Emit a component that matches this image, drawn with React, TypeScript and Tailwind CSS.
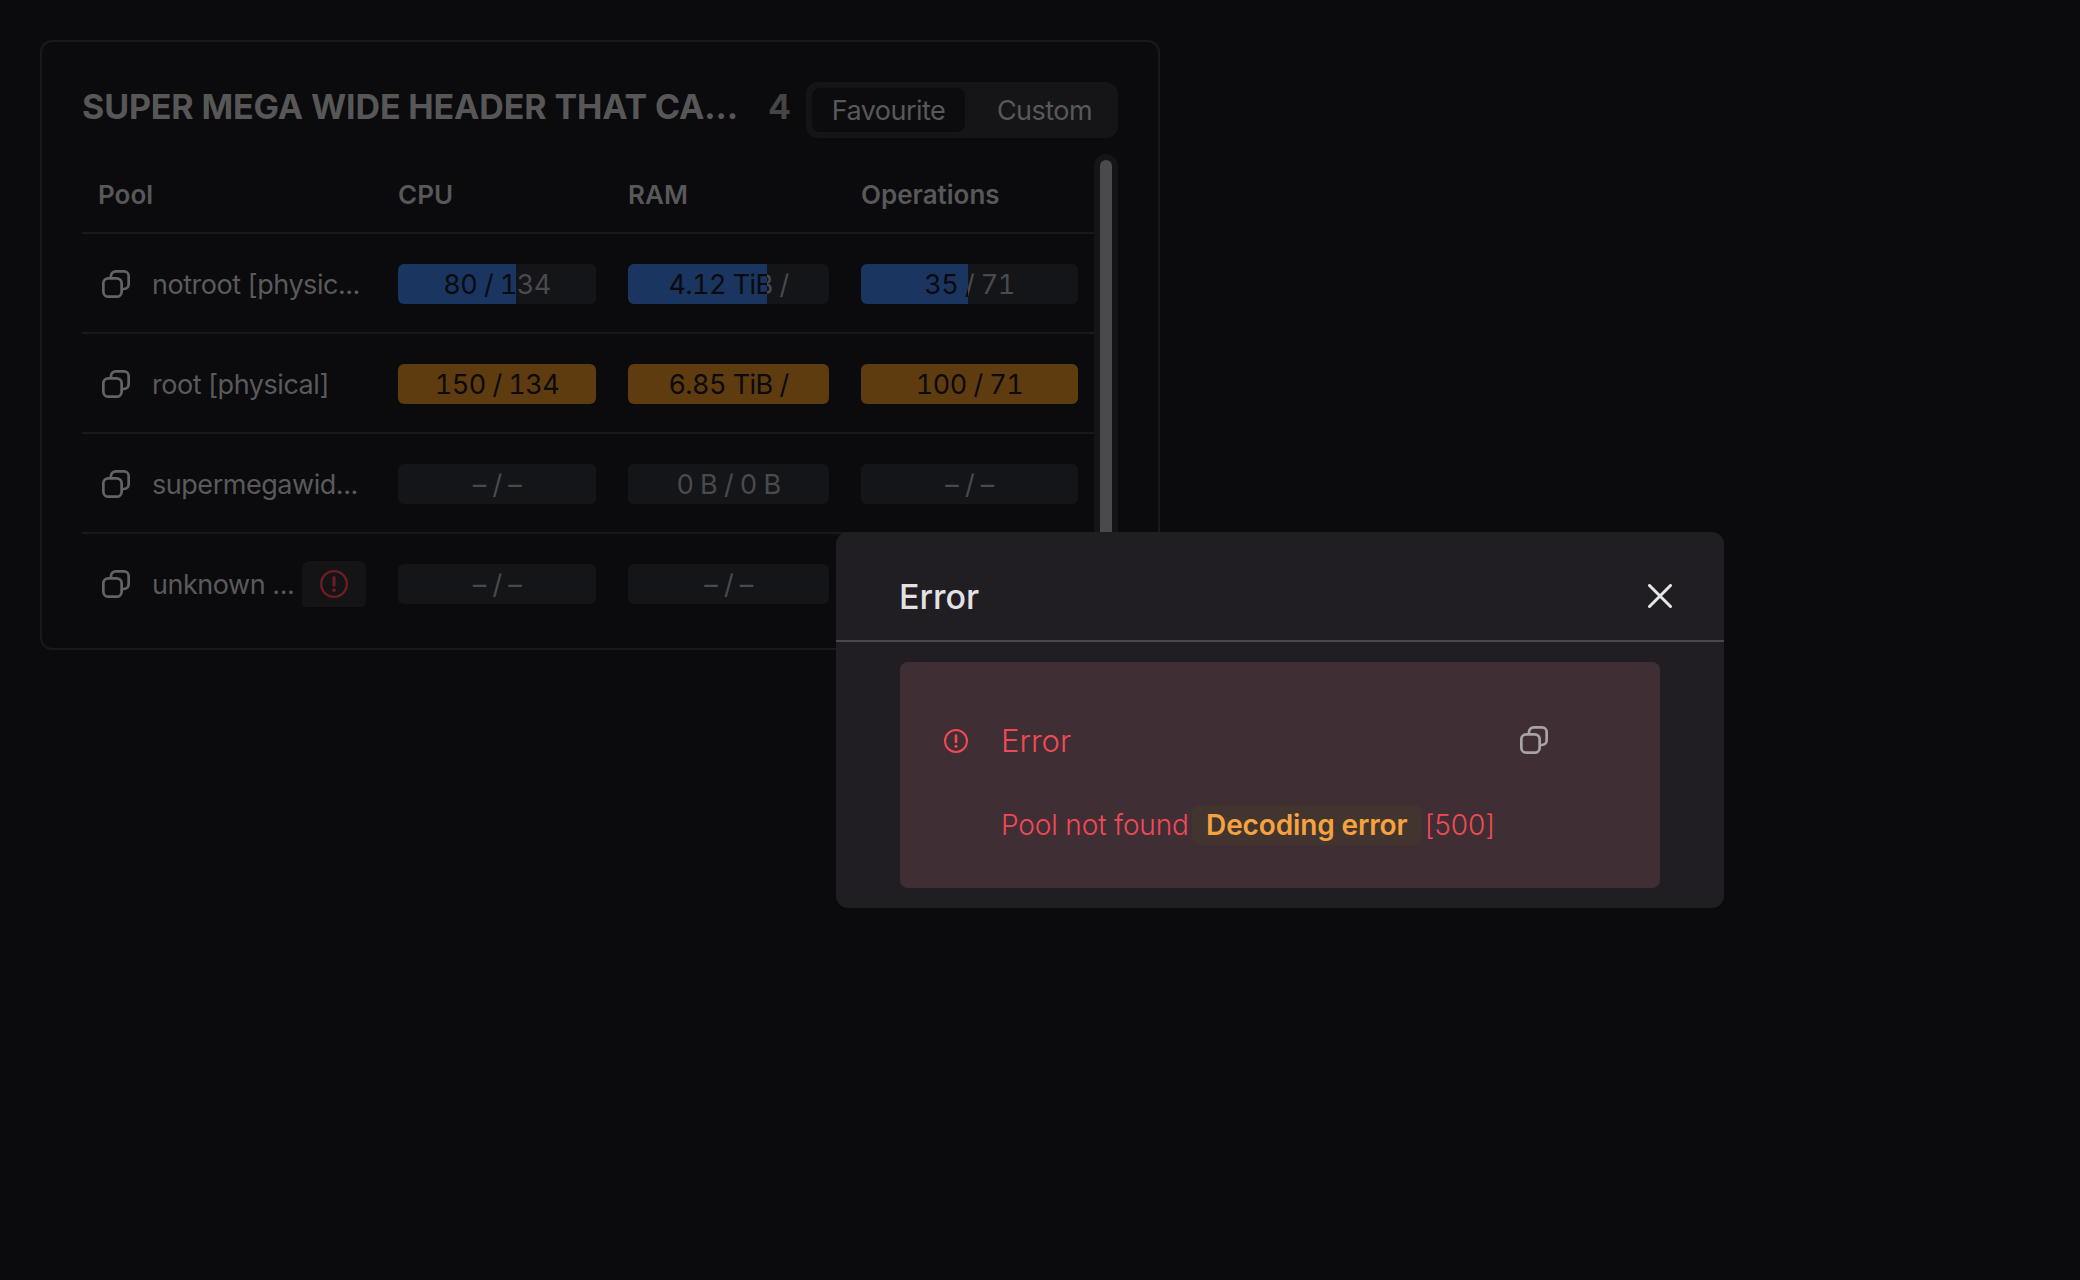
type Cell = { label: string; used?: number; over?: boolean };

type Pool = {
  name: string;
  error?: boolean;
  cpu: Cell;
  ram: Cell;
  ops: Cell;
};

const pools: Pool[] = [
  {
    name: "notroot [physic...",
    cpu: { label: "80 / 134", used: 59.6 },
    ram: { label: "4.12 TiB /", used: 69.2 },
    ops: { label: "35 / 71", used: 49.3 },
  },
  {
    name: "root [physical]",
    cpu: { label: "150 / 134", over: true },
    ram: { label: "6.85 TiB /", over: true },
    ops: { label: "100 / 71", over: true },
  },
  {
    name: "supermegawid...",
    cpu: { label: "– / –" },
    ram: { label: "0 B / 0 B" },
    ops: { label: "– / –" },
  },
  {
    name: "unknown ...",
    error: true,
    cpu: { label: "– / –" },
    ram: { label: "– / –" },
    ops: { label: "– / –" },
  },
];

function CopyIcon({ className }: { className?: string }) {
  return (
    <svg viewBox="0 0 28 28" fill="none" stroke="currentColor" strokeWidth="2.7" className={className}>
      <rect x="1.35" y="8.35" width="18.3" height="18.3" rx="5" />
      <path d="M9 8V6a4.65 4.65 0 0 1 4.65-4.65H22A4.65 4.65 0 0 1 26.65 6v8.35A4.65 4.65 0 0 1 22 19h-2" />
    </svg>
  );
}

function AlertIcon({ className }: { className?: string }) {
  return (
    <svg viewBox="0 0 24 24" fill="none" stroke="currentColor" strokeWidth="2" strokeLinecap="round" className={className}>
      <circle cx="12" cy="12" r="11" />
      <path d="M12 6.5v6.5" strokeWidth="2.6" />
      <path d="M12 17.2v.1" strokeWidth="3" />
    </svg>
  );
}

function Bar({ cell, width }: { cell: Cell; width: string }) {
  const textClass = "flex h-full items-center justify-center pt-0.5 text-[27px] tabular-nums tracking-[-0.02em] whitespace-nowrap";
  if (cell.over) {
    return (
      <div className={`h-10 rounded-md bg-[#5e3c10] text-[#0b0a0d] ${width}`}>
        <div className={textClass}>{cell.label}</div>
      </div>
    );
  }
  return (
    <div className={`relative h-10 overflow-hidden rounded-md bg-[#141518] text-[#4a4a4d] ${width}`}>
      <div className={textClass}>{cell.label}</div>
      {cell.used !== undefined && (
        <div className="absolute inset-y-0 left-0 overflow-hidden bg-[#1a3560] text-[#0b0a0d]" style={{ width: `${cell.used}%` }}>
          <div className={`${textClass} ${width}`}>{cell.label}</div>
        </div>
      )}
    </div>
  );
}

export default function App() {
  return (
    <div className="relative h-[1280px] w-[2080px] overflow-hidden bg-[#0b0a0d] pt-10 pl-10 font-[Inter,sans-serif]">
      <div className="h-[610px] w-[1120px] rounded-xl border-2 border-[#19191c] px-10 pt-10">
        <div className="flex h-14 items-start">
          <h1 className="-mt-[3px] w-[658px] text-[34px] leading-[56px] font-bold tracking-[-0.004em] whitespace-nowrap text-[#575757]">
            SUPER MEGA WIDE HEADER THAT CA...
          </h1>
          <span className="-mt-[3px] ml-7 w-[38px] text-[34px] leading-[56px] font-bold text-[#454545]">4</span>
          <div className="flex h-14 w-[312px] rounded-xl bg-[#151517] p-1.5 text-[27px] tracking-[-0.02em] text-[#58585a]">
            <div className="flex w-[153px] items-center justify-center rounded-lg bg-[#0c0c0f] pt-0.5">Favourite</div>
            <div className="flex flex-1 items-center justify-center pt-0.5 pl-3">Custom</div>
          </div>
        </div>

        <div className="mt-4 flex h-[476px] overflow-hidden">
          <div className="w-[1012px]">
            <div className="grid h-20 grid-cols-[300px_230px_233px_249px] items-center border-b-2 border-[#19191c] pt-[3px] text-[26px] font-semibold text-[#58585a]">
              <div className="pl-4">Pool</div>
              <div className="pl-4">CPU</div>
              <div className="pl-4">RAM</div>
              <div className="pl-4">Operations</div>
            </div>
            {pools.map((pool, i) => (
              <div
                key={pool.name}
                className={`grid h-[100px] grid-cols-[300px_230px_233px_249px] items-center border-b-2 pt-0.5 text-[27px] tracking-[-0.017em] text-[#5a5a5c] ${
                  i < pools.length - 1 ? "border-[#19191c]" : "border-transparent"
                }`}
              >
                <div className="flex items-center pr-4 pl-5">
                  <CopyIcon className="h-7 w-7 shrink-0 text-[#636365]" />
                  <span className="ml-[22px] pt-0.5 whitespace-nowrap">{pool.name}</span>
                  {pool.error && (
                    <div className="ml-auto flex h-[46px] w-16 items-center justify-center rounded-t-lg rounded-b-sm bg-[#141416]">
                      <AlertIcon className="h-7 w-7 text-[#6f1c22]" />
                    </div>
                  )}
                </div>
                <div className="pl-4">
                  <Bar cell={pool.cpu} width="w-[198px]" />
                </div>
                <div className="pl-4">
                  <Bar cell={pool.ram} width="w-[201px]" />
                </div>
                <div className="pl-4">
                  <Bar cell={pool.ops} width="w-[217px]" />
                </div>
              </div>
            ))}
          </div>
          <div className="h-full w-6 rounded-t-xl bg-[#151517] p-1.5">
            <div className="h-full rounded-t-md bg-[#4a4a4c]" />
          </div>
        </div>
      </div>

      <div className="absolute top-[532px] left-[836px] h-[376px] w-[888px] rounded-xl bg-[#211e23]">
        <div className="flex h-[110px] items-center justify-between border-b-2 border-[#4a484c] pt-5 pr-[52px] pl-[63px]">
          <h2 className="text-[34px] font-medium text-[#e2e2e4]">Error</h2>
          <svg viewBox="0 0 24 24" fill="none" stroke="#e6e6e6" strokeWidth="3" strokeLinecap="round" className="h-6 w-6">
            <path d="M1.5 1.5l21 21M22.5 1.5l-21 21" />
          </svg>
        </div>
        <div className="mx-16 mt-5 h-[226px] rounded-lg bg-[#3f2e34] pt-[64px] pl-11 text-[#f04a56]">
          <div className="flex items-center">
            <AlertIcon className="h-6 w-6 shrink-0" />
            <span className="ml-[33px] w-[519px] text-[31px] leading-[30px] font-light">Error</span>
            <CopyIcon className="-mt-0.5 h-7 w-7 text-[#a7a3a6]" />
          </div>
          <div className="mt-[49px] ml-[57px] flex h-10 items-center text-[28px] font-light tracking-[-0.005em]">
            <span>Pool not found</span>
            <span className="ml-[3px] flex h-10 w-[230px] items-center justify-center rounded-lg bg-[#423530] font-semibold text-[#f6a23e]">
              Decoding error
            </span>
            <span className="ml-[3px]">[500]</span>
          </div>
        </div>
      </div>
    </div>
  );
}
